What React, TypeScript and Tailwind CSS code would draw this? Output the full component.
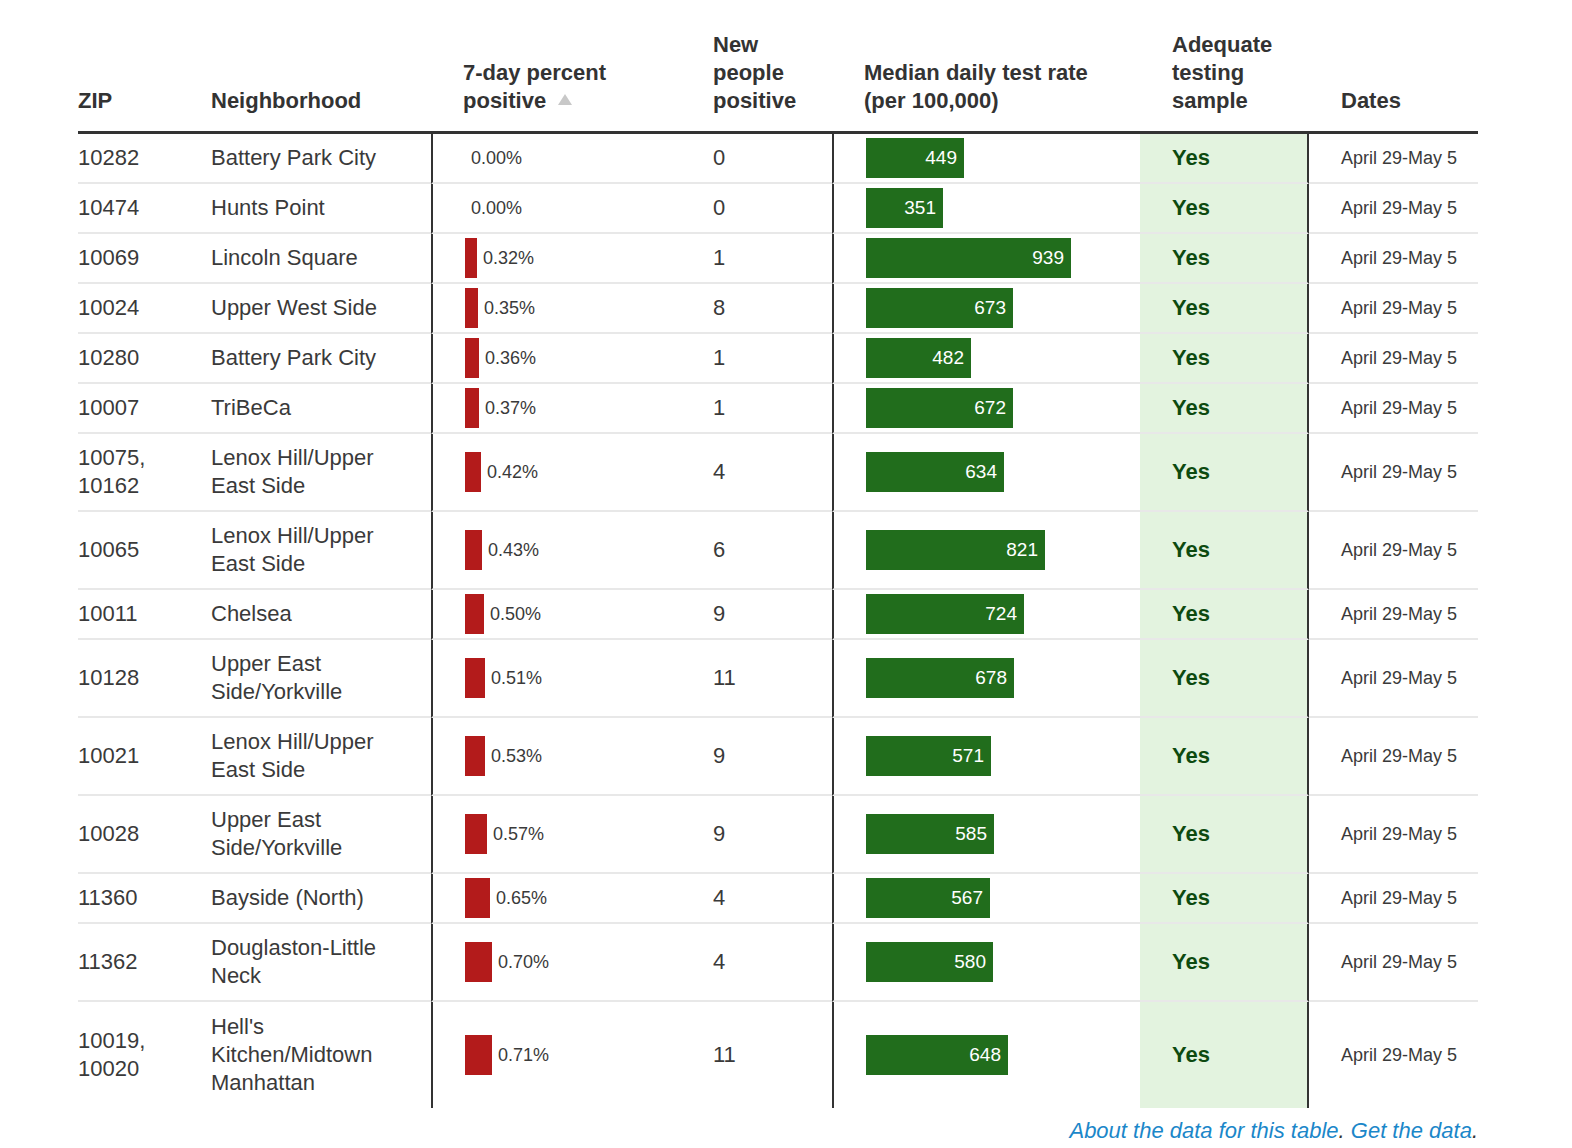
import React from 'react';

type Row = {
	zip: string;
	hood: string;
	pct: number;
	count: number;
	rate: number;
};

const ROWS: Row[] = [
	{ zip: '10282', hood: 'Battery Park City', pct: 0, count: 0, rate: 449 },
	{ zip: '10474', hood: 'Hunts Point', pct: 0, count: 0, rate: 351 },
	{ zip: '10069', hood: 'Lincoln Square', pct: 0.32, count: 1, rate: 939 },
	{ zip: '10024', hood: 'Upper West Side', pct: 0.35, count: 8, rate: 673 },
	{ zip: '10280', hood: 'Battery Park City', pct: 0.36, count: 1, rate: 482 },
	{ zip: '10007', hood: 'TriBeCa', pct: 0.37, count: 1, rate: 672 },
	{ zip: '10075, 10162', hood: 'Lenox Hill/Upper East Side', pct: 0.42, count: 4, rate: 634 },
	{ zip: '10065', hood: 'Lenox Hill/Upper East Side', pct: 0.43, count: 6, rate: 821 },
	{ zip: '10011', hood: 'Chelsea', pct: 0.5, count: 9, rate: 724 },
	{ zip: '10128', hood: 'Upper East Side/Yorkville', pct: 0.51, count: 11, rate: 678 },
	{ zip: '10021', hood: 'Lenox Hill/Upper East Side', pct: 0.53, count: 9, rate: 571 },
	{ zip: '10028', hood: 'Upper East Side/Yorkville', pct: 0.57, count: 9, rate: 585 },
	{ zip: '11360', hood: 'Bayside (North)', pct: 0.65, count: 4, rate: 567 },
	{ zip: '11362', hood: 'Douglaston-Little Neck', pct: 0.7, count: 4, rate: 580 },
	{ zip: '10019, 10020', hood: "Hell's Kitchen/Midtown Manhattan", pct: 0.71, count: 11, rate: 648 },
];

const th = 'align-bottom text-left font-bold text-[22px] leading-[28px] text-[#333] pb-4 border-b-[3px] border-[#333]';

const App = () => {
	return (
		<div
			className="min-h-screen bg-white pt-[31px] pl-[78px]"
			style={{ fontFamily: '"Liberation Sans", Arial, sans-serif' }}
		>
			<div className="w-[1400px]">
				<table className="table-fixed w-full border-separate border-spacing-0">
					<colgroup>
						<col className="w-[101px]" />
						<col className="w-[252px]" />
						<col className="w-[250px]" />
						<col className="w-[151px]" />
						<col className="w-[308px]" />
						<col className="w-[169px]" />
						<col className="w-[169px]" />
					</colgroup>
					<thead>
						<tr>
							<th className={`${th} pr-5`}>ZIP</th>
							<th className={`${th} px-8`}>Neighborhood</th>
							<th className={`${th} px-8`}>
								7-day percent positive
								<span className="inline-block ml-3 mb-[3px] w-0 h-0 border-l-[7px] border-r-[7px] border-b-[11px] border-l-transparent border-r-transparent border-b-[#c8c8c8]" />
							</th>
							<th className={`${th} pl-8 pr-6`}>New people positive</th>
							<th className={`${th} px-8`}>Median daily test rate (per 100,000)</th>
							<th className={`${th} px-8`}>Adequate testing sample</th>
							<th className={`${th} px-8`}>Dates</th>
						</tr>
					</thead>
					<tbody>
						{ROWS.map((r, i) => {
							const last = i === ROWS.length - 1;
							const sep = last ? '' : 'border-b-2 border-b-[#e8e8e8]';
							const pad = last ? 'py-[11px]' : 'py-[10px]';
							return (
								<tr key={i} className="text-[#3a3a3a]">
									<td className={`${sep} ${pad} pr-5 text-[22px] leading-[28px] align-middle`}>
										{r.zip}
									</td>
									<td className={`${sep} ${pad} px-8 text-[22px] leading-[28px] align-middle`}>
										{r.hood}
									</td>
									<td className={`${sep} border-l-2 border-l-[#333] pl-8 pr-4 align-middle`}>
										<div className="flex items-center gap-[6px]">
											<div
												className="h-10 bg-[#b31b1b] shrink-0"
												style={{ width: Math.round(r.pct * 38.5) }}
											/>
											<span className="text-[18px] leading-[28px]">{r.pct.toFixed(2)}%</span>
										</div>
									</td>
									<td className={`${sep} pl-8 pr-4 text-[22px] leading-[28px] align-middle`}>
										{r.count}
									</td>
									<td className={`${sep} border-l-2 border-l-[#333] pl-8 pr-4 align-middle`}>
										<div
											className="h-10 bg-[#216d1c] flex items-center justify-end pr-[7px] text-white text-[19px]"
											style={{ width: Math.round(r.rate * 0.2184) }}
										>
											{r.rate}
										</div>
									</td>
									<td className={`${sep} bg-[#e3f3df] border-r-2 border-r-[#333] px-8 align-middle text-[22px] leading-[28px] font-bold text-[#0d4a0f]`}>
										Yes
									</td>
									<td className={`${sep} pl-8 pr-1 align-middle text-[18px] leading-[28px] whitespace-nowrap`}>
										April 29-May 5
									</td>
								</tr>
							);
						})}
					</tbody>
				</table>
				<div className="mt-[9px] text-right text-[22px] leading-[28px] italic text-[#333]">
					<a className="text-[#1b87c9]">About the data for this table</a>.{' '}
					<a className="text-[#1b87c9]">Get the data</a>.
				</div>
			</div>
		</div>
	);
};

export default App;
